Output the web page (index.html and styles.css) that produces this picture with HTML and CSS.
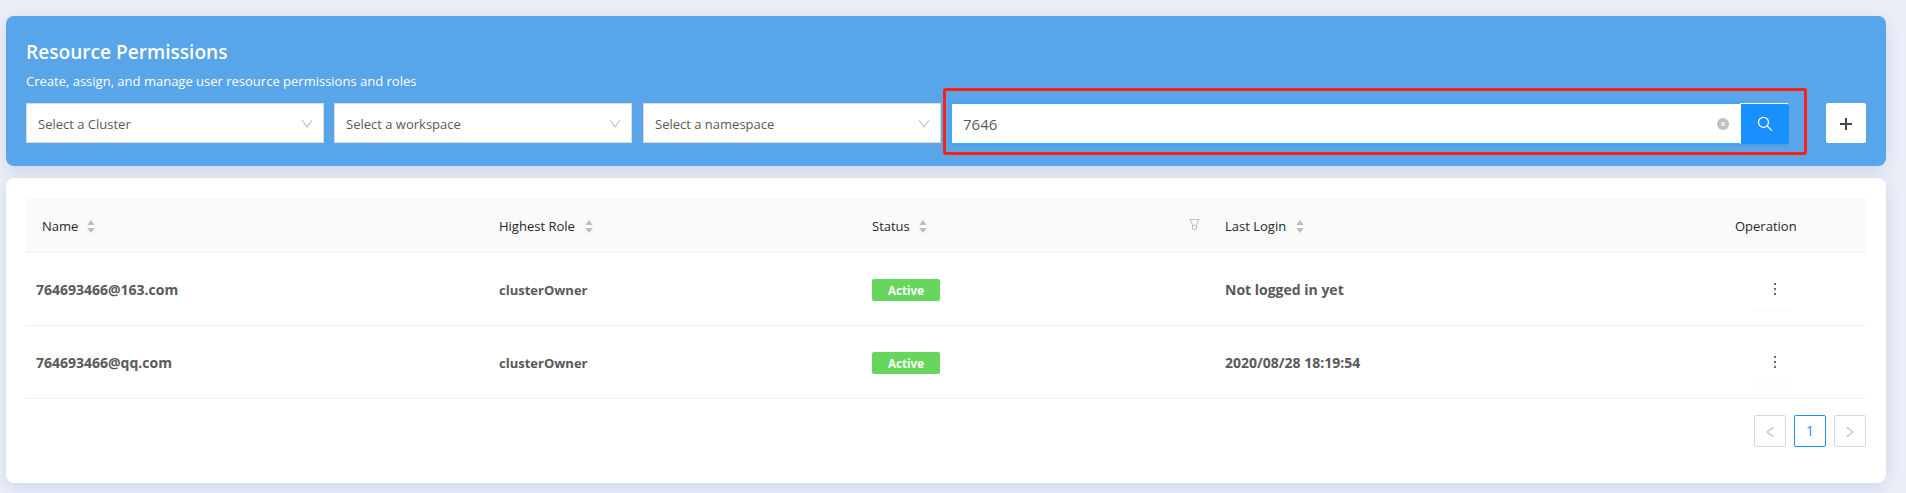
FILE: index.html
```
<!DOCTYPE html>
<html lang="en">
<head>
<meta charset="utf-8">
<title>Resource Permissions</title>
<link rel="stylesheet" href="styles.css">
</head>
<body>
<main class="page">
  <section class="banner">
    <h1 class="title">Resource Permissions</h1>
    <p class="subtitle">Create, assign, and manage user resource permissions and roles</p>
    <div class="filters">
      <div class="select"><span>Select a Cluster</span><svg class="chevron" viewBox="0 0 12 12"><path d="M1.2 2.200 6 9l4.800-6.800"/></svg></div>
      <div class="select"><span>Select a workspace</span><svg class="chevron" viewBox="0 0 12 12"><path d="M1.2 2.200 6 9l4.800-6.800"/></svg></div>
      <div class="select"><span>Select a namespace</span><svg class="chevron" viewBox="0 0 12 12"><path d="M1.2 2.200 6 9l4.800-6.800"/></svg></div>
      <div class="search">
        <div class="search-input">
          <span>7646</span>
          <svg class="clear" viewBox="0 0 12 12"><circle cx="6" cy="6" r="6"/><path d="M4.300 4.200 7.700 7.800M7.700 4.200 4.300 7.800"/></svg>
        </div>
        <div class="search-button">
          <svg class="lens" viewBox="0 0 16 16"><circle cx="6.500" cy="6.300" r="5"/><path d="M10.200 10 14.800 14.600"/></svg>
        </div>
        <div class="highlight"></div>
      </div>
      <div class="add"><svg class="plus" viewBox="0 0 12 12"><path d="M0 6h12M6 0v12"/></svg></div>
    </div>
  </section>

  <section class="card">
    <table class="table">
      <colgroup><col class="c-name"><col class="c-role"><col class="c-status"><col class="c-login"><col class="c-op"></colgroup>
      <thead>
        <tr>
          <th><div class="head">Name<svg class="sorter" viewBox="0 0 8 14"><path d="M4 0 8 5.500H0zM4 14 0 8.500h8z"/></svg></div></th>
          <th><div class="head">Highest Role<svg class="sorter wide" viewBox="0 0 8 14"><path d="M4 0 8 5.500H0zM4 14 0 8.500h8z"/></svg></div></th>
          <th><div class="head">Status<svg class="sorter" viewBox="0 0 8 14"><path d="M4 0 8 5.500H0zM4 14 0 8.500h8z"/></svg><svg class="funnel" viewBox="0 0 11 11"><path d="M.7.5h9.600L7.500 5.600v4.600h-4V5.600zM3.500 6.300h4"/></svg></div></th>
          <th><div class="head">Last Login<svg class="sorter wide" viewBox="0 0 8 14"><path d="M4 0 8 5.500H0zM4 14 0 8.500h8z"/></svg></div></th>
          <th><div class="head">Operation</div></th>
        </tr>
      </thead>
      <tbody>
        <tr>
          <td class="user">764693466@163.com</td>
          <td class="role">clusterOwner</td>
          <td><span class="tag">Active</span></td>
          <td class="login">Not logged in yet</td>
          <td><div class="more"><i></i><i></i><i></i></div></td>
        </tr>
        <tr>
          <td class="user">764693466@qq.com</td>
          <td class="role">clusterOwner</td>
          <td><span class="tag">Active</span></td>
          <td class="login">2020/08/28 18:19:54</td>
          <td><div class="more"><i></i><i></i><i></i></div></td>
        </tr>
      </tbody>
    </table>
    <nav class="pager">
      <span class="page-btn"><svg class="arrow" viewBox="0 0 8 12"><path d="M7.300 1.200 1 6l6.300 4.800"/></svg></span>
      <span class="page-btn current">1</span>
      <span class="page-btn"><svg class="arrow" viewBox="0 0 8 12"><path d="M.7 1.200 7 6 .7 10.800"/></svg></span>
    </nav>
  </section>
</main>
</body>
</html>
```
FILE: styles.css
```
* { box-sizing: border-box; }
body {
  margin: 0;
  height: 493px;
  overflow: hidden;
  background: #ebeff8;
  font: 13px/22px "Open Sans", "Noto Sans", sans-serif;
  color: #595959;
}
svg { display: block; fill: none; flex: none; }
.page {
  width: 1880px;
  margin-left: 6px;
  padding-top: 16px;
  display: flex;
  flex-direction: column;
  gap: 12px;
}
.banner, .card {
  border-radius: 8px;
  box-shadow: 0 4px 16px rgba(70, 120, 170, .2);
}
.banner {
  height: 150px;
  padding: 20px 20px 0;
  background: #58a5ea;
  color: #fff;
}
.title { margin: 0; font-size: 19.100px; line-height: 32px; font-weight: 600; }
.subtitle { margin: 2px 0 0; line-height: 22px; }
.filters { display: flex; margin-top: 11px; }
.select {
  width: 298px;
  height: 40px;
  margin-right: 10px;
  padding: 2px 10px 0 11px;
  display: flex;
  align-items: center;
  justify-content: space-between;
  border: 1px solid #d9d9d9;
  background: #fff;
  color: #595959;
}
.select:nth-child(2) { margin-right: 11px; }
.chevron { width: 12px; height: 12px; stroke: #bfbfbf; stroke-width: 1.1; }
.search { position: relative; display: flex; width: 838px; height: 41px; }
.search-input {
  flex: 1;
  padding: 0 11px;
  display: flex;
  align-items: center;
  justify-content: space-between;
  border: 1px solid #40a9ff;
  border-right: 0;
  background: #fff;
  box-shadow: 0 0 0 2px rgba(24, 144, 255, .2);
  color: #595959;
  font-size: 15px;
}
.clear { width: 12px; height: 12px; fill: #bfbfbf; }
.clear path { stroke: #fff; stroke-width: 1.1; }
.search-button {
  position: relative;
  width: 49px;
  display: flex;
  align-items: center;
  justify-content: center;
  border: solid #fff;
  border-width: 1px 0 0 1px;
  border-radius: 0 2px 2px 0;
  background: #1890ff;
  box-shadow: 0 2px 0 rgba(0, 0, 0, .045);
}
.lens { width: 16px; height: 16px; stroke: #fff; stroke-width: 1.3; }
.highlight {
  position: absolute;
  inset: -15px -18px -11px -8px;
  border: 3px solid #ff2014;
  border-radius: 3px;
}
.add {
  width: 40px;
  height: 40px;
  margin-left: 37px;
  display: grid;
  place-items: center;
  border-radius: 2px;
  background: #fff;
}
.plus { width: 12px; height: 12px; margin-top: 2px; stroke: #262626; stroke-width: 2; opacity: .85; }

.card { height: 305px; padding: 20px 20px 0; background: #fff; }
.table { width: 1840px; table-layout: fixed; border-collapse: separate; border-spacing: 0; }
.c-name { width: 457px; }
.c-role { width: 373px; }
.c-status { width: 353px; }
.c-login { width: 510px; }
.c-op { width: 147px; }
.table th {
  height: 55px;
  padding: 2px 9px 0 16px;
  border-bottom: 1px solid #f0f0f0;
  background: #fafafa;
  color: #262626;
  font-weight: 400;
  text-align: left;
}
.table td {
  height: 73px;
  padding: 2px 16px 0;
  border-bottom: 1px solid #f0f0f0;
  font-size: 14px;
  font-weight: 700;
}
.head { display: flex; align-items: center; }
.sorter { width: 8px; height: 13px; margin-left: 9px; fill: #bfbfbf; }
.wide { margin-left: 10px; }
.funnel { width: 11px; height: 11px; margin: -3px 0 0 auto; stroke: #bfbfbf; }
.table .user { padding-left: 10px; }
.table .role { font-size: 13px; }
.tag {
  display: block;
  width: 68px;
  height: 22px;
  border-radius: 2px;
  background: #67d65d;
  color: #fff;
  font-size: 11.600px;
  line-height: 23px;
  text-align: center;
}
.more {
  width: 40px;
  height: 40px;
  margin-left: 17px;
  padding: 0 0 2px 5px;
  display: flex;
  flex-direction: column;
  align-items: center;
  justify-content: center;
  gap: 3px;
  border-radius: 2px;
  box-shadow: 0 2px 0 rgba(0, 0, 0, .015);
}
.more i { width: 2px; height: 2px; background: #6b6b6b; }
.pager { display: flex; justify-content: flex-end; gap: 8px; margin-top: 16px; }
.page-btn {
  width: 32px;
  height: 32px;
  display: grid;
  place-items: center;
  border: 1px solid #d9d9d9;
  border-radius: 2px;
}
.current { border-color: #1890ff; color: #1890ff; font-size: 14px; }
.arrow { width: 8px; height: 12px; margin-top: 2px; stroke: #bfbfbf; stroke-width: 1.1; }
```
